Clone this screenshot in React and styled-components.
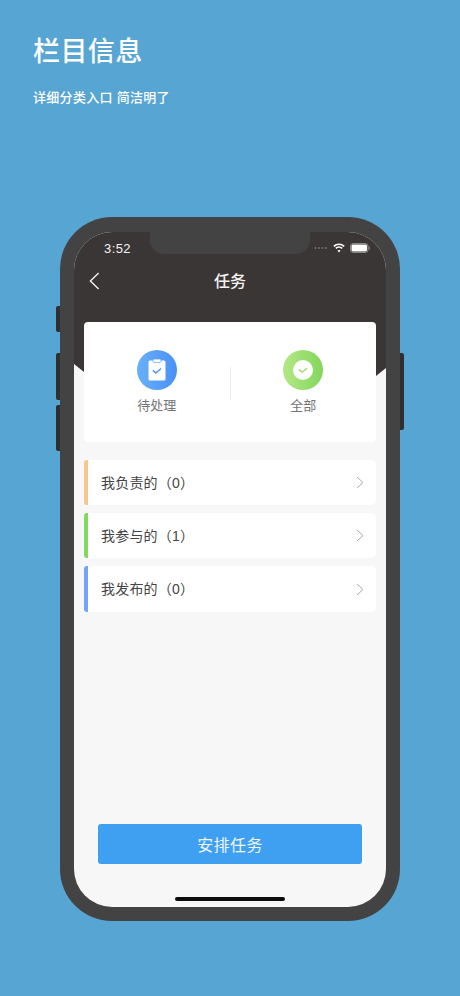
import React from "react";
import styled, { createGlobalStyle } from "styled-components";

const Global = createGlobalStyle`
  html, body { margin: 0; padding: 0; background: #57a5d3; }
  body { font-family: "Liberation Sans", "Noto Sans CJK SC", sans-serif; }
  * { box-sizing: border-box; }
`;

const Page = styled.div`
  width: 460px;
  height: 996px;
  overflow: hidden;
  background: #57a5d3;
  display: flex;
  flex-direction: column;
`;
const Intro = styled.header`
  height: 217px;
  padding: 33px 33px 0;
  color: #fff;
`;
const Title = styled.h1`
  margin: 0;
  font-size: 27px;
  line-height: 38px;
  font-weight: 500;
  letter-spacing: 0.4px;
`;
const Subtitle = styled.p`
  margin: 18px 0 0;
  font-size: 13px;
  line-height: 18px;
  font-weight: 500;
  letter-spacing: 0.3px;
`;
const Phone = styled.div`
  position: relative;
  width: 340px;
  height: 704px;
  margin-left: 60px;
  padding: 15px 14px 14px;
  border-radius: 52px;
  background: #434343;
`;
const SideKey = styled.span`
  position: absolute;
  top: ${(p) => p.$top}px;
  height: ${(p) => p.$h}px;
  width: 4px;
  background: #2f2f31;
  ${(p) => (p.$right ? "right: -4px; border-radius: 0 2px 2px 0;" : "left: -4px; border-radius: 2px 0 0 2px;")}
`;
const Screen = styled.div`
  position: relative;
  height: 675px;
  overflow: hidden;
  border-radius: 38px;
  background: #f7f7f7;
  display: flex;
  flex-direction: column;
  &::before {
    content: "";
    position: absolute;
    left: 0;
    right: 0;
    top: 0;
    height: 148px;
    background: #3a3635;
    clip-path: polygon(0 132px, 10px 140px, 50% 148px, 302px 144px, 312px 136px, 100% 0, 0 0);
  }
`;
const Notch = styled.div`
  position: absolute;
  top: 0;
  left: 76px;
  width: 160px;
  height: 22px;
  background: #434343;
  border-radius: 0 0 14px 14px;
`;
const StatusBar = styled.div`
  position: relative;
  height: 32px;
  padding: 0 16px 0 30px;
  display: flex;
  align-items: center;
  color: #f2f2f2;
`;
const Time = styled.span`
  font-size: 13px;
  font-weight: 500;
  letter-spacing: 0.4px;
  flex: 1;
  font-family: "Liberation Sans", sans-serif;
`;
const StatusIcons = styled.div`
  display: flex;
  align-items: center;
  gap: 5px;
  margin-top: -1px;
`;
const NavBar = styled.div`
  position: relative;
  height: 34px;
  padding-bottom: 2px;
  display: flex;
  align-items: center;
  justify-content: center;
`;
const BackButton = styled.span`
  position: absolute;
  left: 15px;
  top: 8px;
  display: flex;
`;
const NavTitle = styled.h2`
  margin: 0;
  color: #f4f4f4;
  font-size: 16px;
  font-weight: 500;
`;
const Content = styled.div`
  position: relative;
  flex: 1;
  padding: 24px 10px 0;
  display: flex;
  flex-direction: column;
`;
const SummaryCard = styled.section`
  height: 120px;
  margin-bottom: 18px;
  background: #fff;
  border-radius: 4px;
  display: grid;
  grid-template-columns: 1fr 1px 1fr;
  align-items: start;
`;
const SummaryItem = styled.div`
  padding-top: 28px;
  display: flex;
  flex-direction: column;
  align-items: center;
  gap: 7px;
  color: #747474;
  font-size: 13px;
  line-height: 18px;
`;
const Divider = styled.span`
  margin-top: 45px;
  height: 33px;
  background: #ececec;
`;
const IconDisc = styled.span`
  width: 40px;
  height: 40px;
  border-radius: 50%;
  background: linear-gradient(90deg, ${(p) => p.$from}, ${(p) => p.$to});
  display: flex;
  align-items: center;
  justify-content: center;
`;
const Rows = styled.div`
  display: flex;
  flex-direction: column;
  gap: 8px;
`;
const Row = styled.div`
  position: relative;
  height: ${(p) => p.$h}px;
  padding: 0 12px 0 17px;
  border-radius: 5px;
  background: #fff;
  display: flex;
  align-items: center;
  justify-content: space-between;
  color: #444;
  font-size: 14px;
  letter-spacing: 0.2px;
  &::before {
    content: "";
    position: absolute;
    left: 0;
    top: 0;
    bottom: 0;
    width: 4px;
    border-radius: 3px 0 0 3px;
    background: ${(p) => p.$accent};
  }
`;
const RowLabel = styled.span`
  margin-top: -2px;
`;
const Spacer = styled.div`
  flex: 1;
`;
const ActionButton = styled.button`
  width: 264px;
  height: 40px;
  margin: 0 0 43px 14px;
  padding: 0;
  border: 0;
  border-radius: 3px;
  background: #3fa0f1;
  color: #eef6fd;
  font: 400 16px "Liberation Sans", "Noto Sans CJK SC", sans-serif;
  letter-spacing: 0.4px;
`;
const HomeBar = styled.span`
  position: absolute;
  left: 101px;
  bottom: 6px;
  width: 110px;
  height: 4px;
  border-radius: 2px;
  background: #0c0c0c;
`;

const rows = [
  { label: "我负责的（0）", accent: "#f9c48d", h: 45 },
  { label: "我参与的（1）", accent: "#82d95f", h: 45 },
  { label: "我发布的（0）", accent: "#73a5f5", h: 46 },
];

const Chevron = () => (
  <svg width="8" height="13" viewBox="0 0 8 13" fill="none" stroke="#a8a8a8" strokeWidth="1">
    <path d="M1 1l6 5.5L1 12" />
  </svg>
);

export default function App() {
  return (
    <Page>
      <Global />
      <Intro>
        <Title>栏目信息</Title>
        <Subtitle>详细分类入口 简洁明了</Subtitle>
      </Intro>
      <Phone>
        <SideKey $top={89} $h={26} />
        <SideKey $top={136} $h={47} />
        <SideKey $top={188} $h={46} />
        <SideKey $right $top={136} $h={77} />
        <Screen>
          <Notch />
          <StatusBar>
            <Time>3:52</Time>
            <StatusIcons>
              <svg width="14" height="4" viewBox="0 0 14 4" fill="#77726f">
                <circle cx="1.5" cy="2" r="1" />
                <circle cx="5" cy="2" r="1" />
                <circle cx="8.5" cy="2" r="1" />
                <circle cx="12" cy="2" r="1" />
              </svg>
              <svg width="12" height="10" viewBox="0 0 12 10" fill="none" stroke="#fff" strokeWidth="1.5">
                <path d="M.8 3.4a7.4 7.4 0 0 1 10.4 0" />
                <path d="M2.8 5.4a4.6 4.6 0 0 1 6.4 0" />
                <path d="M6 9.6L4.4 7.6a2.4 2.4 0 0 1 3.2 0z" fill="#fff" stroke="none" />
              </svg>
              <svg width="20" height="10" viewBox="0 0 20 10">
                <rect x=".5" y=".5" width="17.5" height="9" rx="2.5" fill="none" stroke="#8b8785" />
                <rect x="1.5" y="1.5" width="15.5" height="7" rx="1.4" fill="#fff" />
                <rect x="18.6" y="3.5" width="1.2" height="3" rx=".6" fill="#8b8785" />
              </svg>
            </StatusIcons>
          </StatusBar>
          <NavBar>
            <BackButton>
              <svg width="11" height="18" viewBox="0 0 11 18" fill="none" stroke="#f2f2f2" strokeWidth="1.4">
                <path d="M9.6 1L1.4 9l8.2 8" />
              </svg>
            </BackButton>
            <NavTitle>任务</NavTitle>
          </NavBar>
          <Content>
            <SummaryCard>
              <SummaryItem>
                <IconDisc $from="#69b0f8" $to="#4a90f6">
                  <svg width="18" height="22" viewBox="0 0 18 22">
                    <rect x="0.5" y="1.5" width="17" height="20" rx="1.5" fill="#fff" />
                    <rect x="5" y="0" width="8" height="3.4" rx="1.2" fill="#fff" stroke="#69a6f7" strokeWidth=".8" />
                    <path d="M4.8 11.2l3 2.8 5.2-4.6" fill="none" stroke="#4f93f3" strokeWidth="1.4" />
                  </svg>
                </IconDisc>
                待处理
              </SummaryItem>
              <Divider />
              <SummaryItem>
                <IconDisc $from="#b3e885" $to="#83d65c">
                  <svg width="20" height="20" viewBox="0 0 20 20">
                    <circle cx="10" cy="10" r="10" fill="#fff" />
                    <path d="M6 9.6l3.2 2.6 5-4" fill="none" stroke="#a3d56f" strokeWidth="1.4" />
                  </svg>
                </IconDisc>
                全部
              </SummaryItem>
            </SummaryCard>
            <Rows>
              {rows.map((r) => (
                <Row key={r.label} $accent={r.accent} $h={r.h}>
                  <RowLabel>{r.label}</RowLabel>
                  <Chevron />
                </Row>
              ))}
            </Rows>
            <Spacer />
            <ActionButton>安排任务</ActionButton>
            <HomeBar />
          </Content>
        </Screen>
      </Phone>
    </Page>
  );
}
